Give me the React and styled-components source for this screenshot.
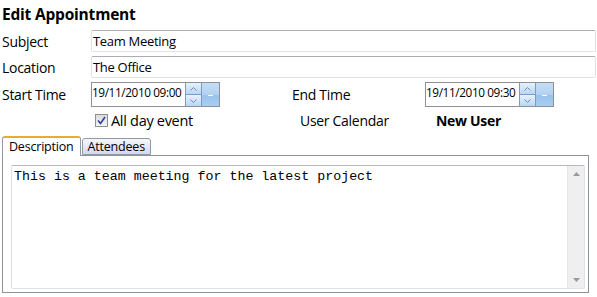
import styled, { createGlobalStyle } from "styled-components";

const Global = createGlobalStyle`
  html, body { margin: 0; padding: 0; background: #fff; }
  body { font-family: "Open Sans", "Noto Sans", sans-serif; color: #000; }
`;

const Page = styled.div`
  width: 597px;
  height: 297px;
  padding: 3px 1px 0 2px;
  box-sizing: border-box;
  display: flex;
  flex-direction: column;
`;

const Title = styled.div`
  font-size: 15.5px;
  font-weight: 700;
  height: 27px;
  line-height: 22px;
  letter-spacing: -0.2px;
`;

const Row = styled.div`
  display: flex;
  align-items: center;
  height: ${(p) => p.h || 22}px;
  margin-top: ${(p) => p.mt || 0}px;
  margin-bottom: ${(p) => p.mb || 0}px;
`;

const Label = styled.div`
  width: ${(p) => p.w || 89}px;
  padding-left: ${(p) => p.pl || 0}px;
  box-sizing: border-box;
  flex-shrink: 0;
  font-size: 14px;
  letter-spacing: -0.3px;
  font-weight: ${(p) => (p.bold ? 700 : 400)};
`;

const TextBox = styled.div`
  flex: 1;
  height: 22px;
  box-sizing: border-box;
  border: 1px solid #dfe3e8;
  border-top-color: #abadb3;
  border-left-color: #e2e3ea;
  border-radius: 2px;
  font-size: 13px;
  letter-spacing: -0.3px;
  line-height: 20px;
  padding-left: 1px;
`;

const DateBox = styled.div`
  width: 129px;
  height: 25px;
  box-sizing: border-box;
  border: 1px solid #8d9098;
  display: flex;
`;

const DateText = styled.div`
  flex: 1;
  font-size: 11.8px;
  letter-spacing: -0.4px;
  line-height: 19px;
`;

const Spin = styled.div`
  width: 15px;
  display: flex;
  flex-direction: column;
  border-left: 1px solid #7a9cc8;
`;

const SpinBtn = styled.div`
  flex: 1;
  background: linear-gradient(#e8f2fc, #b9d6f2);
  border-bottom: ${(p) => (p.top ? "1px solid #7a9cc8" : "none")};
  display: flex;
  align-items: center;
  justify-content: center;
`;

const Drop = styled.div`
  width: 17px;
  border-left: 1px solid #7a9cc8;
  background: linear-gradient(#c5ddf6 0%, #b2d1f1 50%, #98c2eb 51%, #a9cdf0 100%);
  display: flex;
  align-items: center;
  justify-content: center;
  &::after {
    content: "";
    width: 5px;
    height: 1px;
    background: #fff;
    margin-top: 2px;
  }
`;

const Check = styled.span`
  width: 11px;
  height: 11px;
  border: 1px solid #8f8f8f;
  background: linear-gradient(#dcdcdc, #f4f4f4);
  display: inline-flex;
  align-items: center;
  justify-content: center;
  margin-right: 3px;
`;

const CheckLabel = styled.div`
  display: flex;
  align-items: center;
  font-size: 14.5px;
  letter-spacing: -0.3px;
  margin-left: 93px;
  width: 205px;
`;

const TabStrip = styled.div`
  display: flex;
  align-items: flex-end;
  height: 20px;
  margin-top: 5px;
`;

const Tab = styled.div`
  height: ${(p) => (p.active ? 20 : 17)}px;
  box-sizing: border-box;
  padding: 0 ${(p) => (p.active ? 6 : 5)}px;
  font-size: 12.5px;
  letter-spacing: -0.2px;
  line-height: ${(p) => (p.active ? 17 : 15)}px;
  border: 1px solid #8d9aa8;
  border-bottom: ${(p) => (p.active ? "none" : "1px solid #8d9aa8")};
  border-top: ${(p) => (p.active ? "2px solid #f0a830" : "1px solid #8d9aa8")};
  border-radius: 3px 3px 0 0;
  margin-right: 1px;
  background: ${(p) => (p.active ? "#fff" : "linear-gradient(#f7f7fb, #d6d8ea)")};
  position: relative;
  z-index: ${(p) => (p.active ? 1 : 0)};
  margin-bottom: ${(p) => (p.active ? -1 : 0)}px;
`;

const Panel = styled.div`
  width: 587px;
  height: 138px;
  box-sizing: border-box;
  border: 1px solid #8f9396;
  padding: 9px 3px 3px 8px;
  display: flex;
`;

const Memo = styled.div`
  flex: 1;
  border: 1px solid #dfe2e8;
  border-top-color: #b5b8be;
  border-radius: 2px;
  display: flex;
`;

const MemoText = styled.div`
  flex: 1;
  font-family: "Liberation Mono", monospace;
  font-size: 13.3px;
  line-height: 16px;
  padding: 3px 2px;
`;

const ScrollBar = styled.div`
  width: 16px;
  background: #efefef;
  border-left: 1px solid #e6e6e6;
  display: flex;
  flex-direction: column;
  justify-content: space-between;
  align-items: center;
  padding: 6px 0;
`;

function Arrow({ up, color, w = 7 }) {
  return (
    <svg width={w} height="4" viewBox="0 0 7 4">
      <path d={up ? "M0 4 L3.5 0 L7 4 Z" : "M0 0 L3.5 4 L7 0 Z"} fill={color} />
    </svg>
  );
}

function Chevron({ up }) {
  return (
    <svg width="7" height="4" viewBox="0 0 7 4">
      <path
        d={up ? "M0.5 3.5 L3.5 0.5 L6.5 3.5" : "M0.5 0.5 L3.5 3.5 L6.5 0.5"}
        fill="none"
        stroke="#6a8fb8"
        strokeWidth="1"
      />
    </svg>
  );
}

function DatePicker({ value }) {
  return (
    <DateBox>
      <DateText>{value}</DateText>
      <Spin>
        <SpinBtn top>
          <Chevron up />
        </SpinBtn>
        <SpinBtn>
          <Chevron />
        </SpinBtn>
      </Spin>
      <Drop />
    </DateBox>
  );
}

export default function App() {
  return (
    <Page>
      <Global />
      <Title>Edit Appointment</Title>
      <Row mb={4}>
        <Label>Subject</Label>
        <TextBox>Team Meeting</TextBox>
      </Row>
      <Row mb={4}>
        <Label>Location</Label>
        <TextBox>The Office</TextBox>
      </Row>
      <Row h={25}>
        <Label>Start Time</Label>
        <DatePicker value="19/11/2010 09:00" />
        <Label w={205} pl={72}>
          End Time
        </Label>
        <DatePicker value="19/11/2010 09:30" />
      </Row>
      <Row h={20} mt={3}>
        <CheckLabel>
          <Check>
            <svg width="9" height="9" viewBox="0 0 9 9">
              <path d="M1 4.5 L3.5 7.5 L8 1" fill="none" stroke="#2a3f9a" strokeWidth="1.6" />
            </svg>
          </Check>
          All day event
        </CheckLabel>
        <Label w={136}>User Calendar</Label>
        <Label bold>New User</Label>
      </Row>
      <TabStrip>
        <Tab active>Description</Tab>
        <Tab>Attendees</Tab>
      </TabStrip>
      <Panel>
        <Memo>
          <MemoText>This is a team meeting for the latest project</MemoText>
          <ScrollBar>
            <Arrow up color="#9a9a9a" />
            <Arrow color="#9a9a9a" />
          </ScrollBar>
        </Memo>
      </Panel>
    </Page>
  );
}
